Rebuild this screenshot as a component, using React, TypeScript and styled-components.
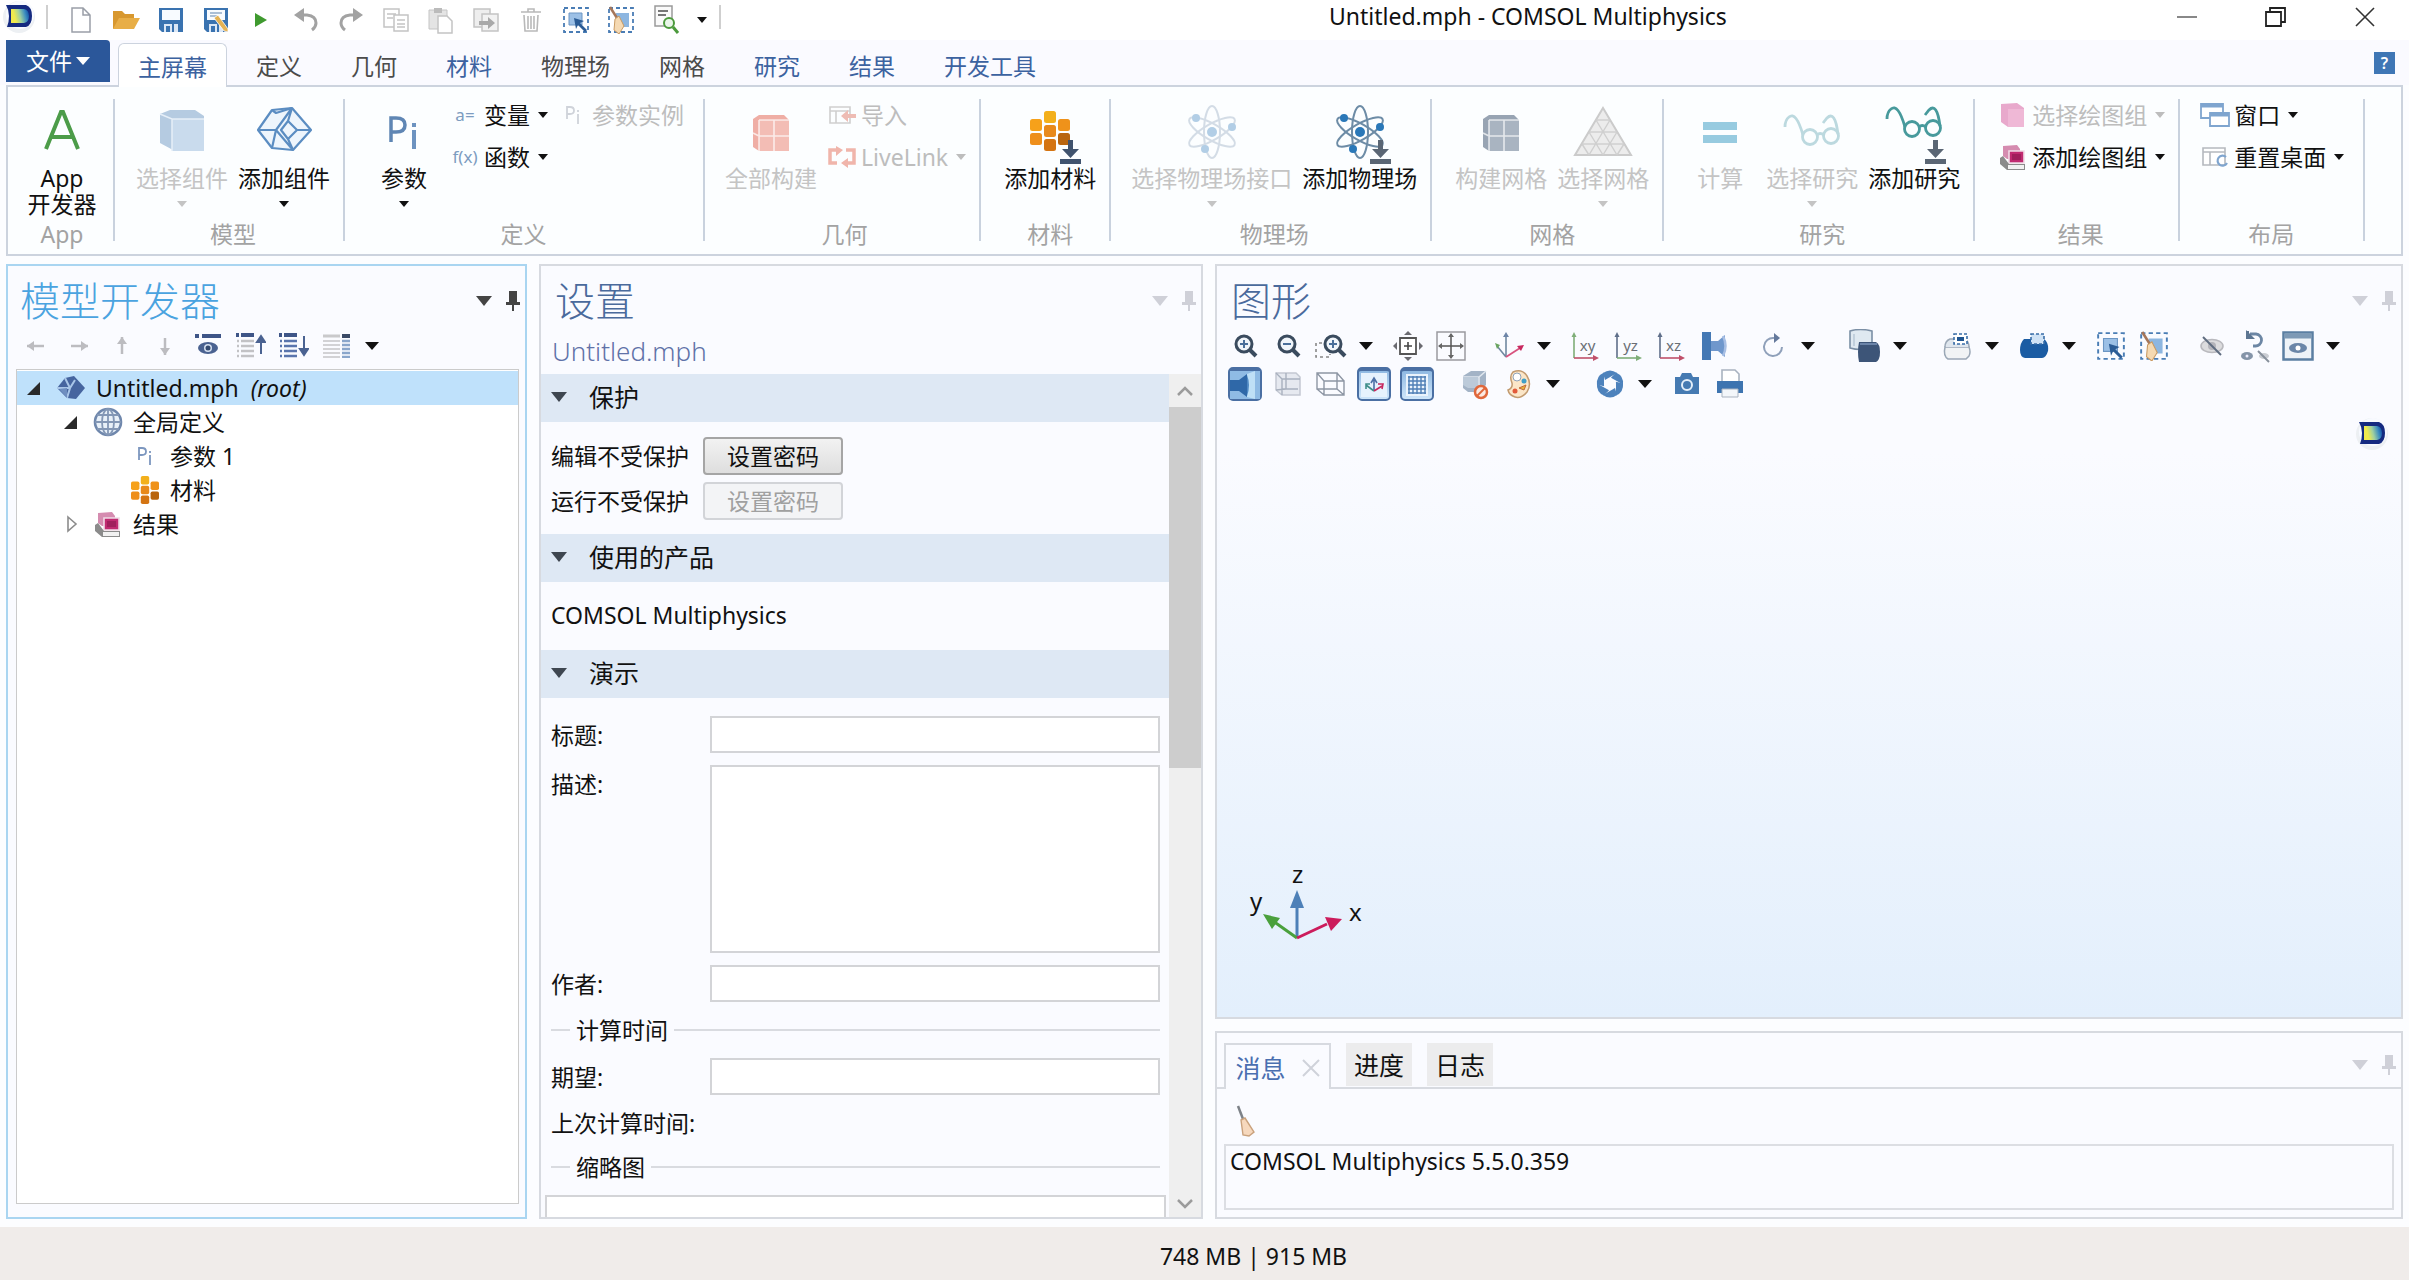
import React, { useState } from 'react';
import type { ReactNode } from 'react';
import styled, { createGlobalStyle } from 'styled-components';

const FONT = '"Noto Sans", "Noto Sans CJK SC", sans-serif';

const GlobalStyle = createGlobalStyle`
  html, body { margin: 0; padding: 0; height: 100%; }
  body {
    font-family: ${FONT};
    font-size: 23px;
    line-height: 26px;
    color: #111;
    background: #fcfdff;
    overflow: hidden;
  }
  *, *::before, *::after { box-sizing: border-box; }
  button, input, textarea { font: inherit; color: inherit; margin: 0; }
  button { background: none; border: 0; padding: 0; }
  svg { display: block; flex: none; }
`;

/* ---------- layout ---------- */

const Window = styled.div`
  display: flex;
  flex-direction: column;
  height: 100vh;
  white-space: nowrap;
`;

const TitleBar = styled.header`
  display: grid;
  grid-template-columns: 1fr auto 1fr;
  align-items: center;
  height: 40px;
  flex: none;
  background: #fff;
`;

const QuickBar = styled.div`
  display: flex;
  align-items: center;
  padding-left: 2px;
`;

const QuickButton = styled.button<{ $w?: number }>`
  width: ${p => p.$w ?? 45}px;
  height: 40px;
  display: flex;
  align-items: center;
  justify-content: center;
`;

const Rule = styled.span<{ $gap?: number }>`
  width: 2px;
  height: 24px;
  margin: 0 ${p => p.$gap ?? 8}px 6px;
  background: #cfcfcf;
`;

const AppMark = styled.span`
  padding-bottom: 6px;
`;

const WindowTitle = styled.h1`
  margin: 0;
  padding: 0 0 8px 604px;
  font-size: 23px;
  line-height: 32px;
  font-weight: 400;
`;

const WindowButtons = styled.div`
  display: flex;
  justify-content: flex-end;
`;

const WindowButton = styled.button`
  width: 89px;
  height: 40px;
  padding-bottom: 6px;
  display: flex;
  align-items: center;
  justify-content: center;
`;

const TabRow = styled.nav`
  display: flex;
  height: 45px;
  flex: none;
  padding: 0 6px;
  background: #fafaff;
`;

const FileButton = styled.button`
  width: 104px;
  height: 42px;
  margin-right: 8px;
  display: flex;
  align-items: center;
  justify-content: center;
  gap: 4px;
  border-radius: 0 4px 0 0;
  background: #2b579a;
  color: #fff;
`;

const RibbonTab = styled.button<{ $active?: boolean; $blue?: boolean }>`
  margin-top: 3px;
  height: ${p => (p.$active ? 44 : 42)}px;
  padding: ${p => (p.$active ? 2 : 4)}px ${p => (p.$active ? 19 : 24)}px 0 ${p => (p.$active ? 19 : 25)}px;
  margin-right: ${p => (p.$active ? 4 : 0)}px;
  border: ${p => (p.$active ? '1px solid #ccd3de' : '0')};
  border-bottom: 0;
  border-radius: 6px 6px 0 0;
  position: relative;
  z-index: 1;
  background: ${p => (p.$active ? '#fff' : 'transparent')};
  color: ${p => (p.$active || p.$blue ? '#3c62a0' : '#4b4b4b')};
`;

const HelpButton = styled.button`
  margin: 12px 8px 0 auto;
  width: 21px;
  height: 22px;
  background: #3f76b5;
  color: #fff;
  font-size: 16px;
  line-height: 22px;
  font-weight: 600;
`;

const Ribbon = styled.section`
  display: flex;
  flex: none;
  height: 171px;
  margin: 0 6px 8px;
  border: 2px solid #ccd3de;
  background: #fcfeff;
`;

const Group = styled.div<{ $left?: number; $right?: number }>`
  display: flex;
  flex-direction: column;
  justify-content: space-between;
  padding: 7px ${p => p.$right ?? 8}px 5px ${p => p.$left ?? 15}px;
  border-right: 2px solid transparent;
  border-image: linear-gradient(transparent 13px, #c9d2de 13px, #c9d2de 153px, transparent 153px) 1;
  border-image-width: 0 2px 0 0;
`;

const GroupBody = styled.div`
  display: flex;
  align-items: flex-start;
`;

const GroupName = styled.div`
  text-align: center;
  line-height: 30px;
  color: #a3a3a3;
`;

const BigButton = styled.button`
  min-width: 82px;
  padding: 7px 5px 0;
  display: flex;
  flex-direction: column;
  align-items: center;
  line-height: 26px;
  color: #111;
  &:disabled { color: #c4c4c4; }
`;

const CaretSlot = styled.span`
  height: 26px;
  display: flex;
  align-items: center;
`;

const Stack = styled.div`
  display: flex;
  flex-direction: column;
  align-items: flex-start;
  margin-left: 6px;
`;

const StackRow = styled.div`
  display: flex;
  gap: 8px;
`;

const SmallButton = styled.button`
  height: 42px;
  display: flex;
  align-items: center;
  gap: 5px;
  color: #111;
  &:disabled { color: #bdbdbd; }
`;

const SmallIcon = styled.span`
  width: 28px;
  display: flex;
  justify-content: center;
  color: #7d9cc0;
  font-size: 17px;
`;

const SmallCaret = styled.span`
  width: 16px;
  display: flex;
  justify-content: center;
`;

const Desk = styled.main`
  flex: 1;
  min-height: 0;
  display: grid;
  grid-template-columns: 521fr 664fr 1188fr;
  gap: 12px;
  padding: 0 6px;
`;

const RightColumn = styled.div`
  display: flex;
  flex-direction: column;
  gap: 12px;
  min-height: 0;
`;

const Panel = styled.section<{ $active?: boolean; $grow?: boolean }>`
  display: flex;
  flex-direction: column;
  min-height: 0;
  flex: ${p => (p.$grow ? '1' : 'none')};
  border: 2px solid ${p => (p.$active ? '#a9d5f1' : '#d7dae0')};
  background: #fafbff;
  overflow: hidden;
`;

const PanelHead = styled.div<{ $left?: number }>`
  flex: none;
  height: 61px;
  padding: 8px 5px 0 ${p => p.$left ?? 14}px;
  display: flex;
  align-items: center;
`;

const PanelTitle = styled.h2<{ $active?: boolean }>`
  margin: 0 auto 0 0;
  font-size: 40px;
  line-height: 52px;
  font-weight: 300;
  color: ${p => (p.$active ? '#4aa3e0' : '#4a6a9c')};
`;

const PanelTools = styled.div<{ $active?: boolean }>`
  display: flex;
  align-items: center;
  gap: 14px;
  margin-left: auto;
  color: ${p => (p.$active ? '#444' : '#cfd0d8')};
`;

const ToolRow = styled.div`
  flex: none;
  height: 38px;
  display: flex;
  align-items: center;
  padding-left: 6px;
`;

const ToolButton = styled.button<{ $gap?: number }>`
  width: 43px;
  height: 38px;
  margin-left: ${p => p.$gap ?? 0}px;
  display: flex;
  align-items: center;
  justify-content: center;
`;

const ToolCaret = styled(ToolButton)`
  width: 27px;
`;

const Pressed = styled.span`
  width: 34px;
  height: 34px;
  display: flex;
  align-items: center;
  justify-content: center;
  border: 2px solid #4a6fa3;
  border-top-width: 4px;
  border-radius: 5px;
  background: linear-gradient(#8fb9e2, #cfe6fa);
`;

/* ---------- model tree ---------- */

const Tree = styled.ul`
  flex: 1;
  margin: 4px 6px 13px 8px;
  padding: 1px 0 0;
  list-style: none;
  border: 1px solid #cbcbcb;
  background: #fff;
`;

const TreeItem = styled.li<{ $depth: number; $selected?: boolean }>`
  height: 34px;
  display: flex;
  align-items: center;
  padding-left: ${p => 10 + p.$depth * 37}px;
  background: ${p => (p.$selected ? '#bfe1fb' : 'transparent')};
`;

const Twisty = styled.button`
  width: 14px;
  height: 34px;
  margin-right: 14px;
  display: flex;
  align-items: center;
`;

const TreeIcon = styled.span`
  width: 32px;
  margin-right: 9px;
  display: flex;
  justify-content: center;
`;

const RootHint = styled.em`
  margin-left: 12px;
`;

/* ---------- settings ---------- */

const SubTitle = styled.div`
  flex: none;
  height: 47px;
  padding: 3px 0 0 11px;
  font-size: 26px;
  line-height: 42px;
  font-weight: 300;
  color: #5f72a8;
`;

const ScrollArea = styled.div`
  flex: 1;
  min-height: 0;
  display: flex;
`;

const ScrollContent = styled.div`
  flex: 1;
  min-width: 0;
  overflow: hidden;
`;

const SectionHead = styled.button`
  width: 100%;
  height: 48px;
  padding: 0 0 3px 10px;
  display: flex;
  align-items: center;
  gap: 22px;
  font-size: 25px;
  background: #dee8f4;
`;

const ProtectGrid = styled.div`
  display: grid;
  grid-template-columns: max-content 140px;
  gap: 7px 14px;
  align-items: center;
  padding: 15px 10px 14px;
`;

const PushButton = styled.button`
  height: 38px;
  border: 2px solid #a5a5a5;
  border-radius: 4px;
  background: linear-gradient(#f2f2f2, #dedede);
  &:disabled {
    color: #a0a0a0;
    border-color: #d2d4d8;
    background: #f3f4f6;
  }
`;

const ProductLine = styled.div`
  padding: 17px 10px 19px;
  line-height: 32px;
`;

const Form = styled.form`
  display: flex;
  flex-direction: column;
  gap: 12px;
  padding: 18px 9px 0 10px;
`;

const Field = styled.div`
  display: grid;
  grid-template-columns: 159px 1fr;
  align-items: start;
`;

const FieldLabel = styled.label`
  padding-top: 2px;
  line-height: 35px;
`;

const TextInput = styled.input`
  width: 100%;
  height: 37px;
  border: 2px solid #d3d4d7;
  background: #fff;
`;

const TextBox = styled.textarea`
  display: block;
  width: 100%;
  height: 188px;
  border: 2px solid #d3d4d7;
  background: #fff;
  resize: none;
`;

const Divider = styled.div`
  display: flex;
  align-items: center;
  gap: 6px;
  line-height: 32px;
  &::before, &::after {
    content: '';
    height: 2px;
    background: #d9dbe0;
  }
  &::before { width: 19px; }
  &::after { flex: 1; }
`;

const PlainRow = styled.div`
  line-height: 32px;
`;

const Thumbnail = styled.div`
  height: 200px;
  margin: 0 -6px;
  border: 2px solid #d3d4d7;
  background: #fff;
`;

const ScrollBar = styled.div`
  width: 32px;
  flex: none;
  display: flex;
  flex-direction: column;
  background: #efefef;
`;

const ScrollArrow = styled.button<{ $h: number }>`
  height: ${p => p.$h}px;
  display: flex;
  align-items: center;
  justify-content: center;
`;

const ScrollTrack = styled.div`
  flex: 1;
`;

const ScrollThumb = styled.div`
  height: 46%;
  background: #cdcdcd;
`;

/* ---------- graphics and messages ---------- */

const Canvas = styled.div`
  flex: 1;
  position: relative;
  background: linear-gradient(#fafbff 8%, #e3effc);
`;

const CanvasLogo = styled.div`
  position: absolute;
  top: 14px;
  right: 12px;
`;

const Axes = styled.div`
  position: absolute;
  left: 22px;
  bottom: 67px;
`;

const LogTabs = styled.div`
  height: 56px;
  flex: none;
  padding: 10px 5px 0 7px;
  display: flex;
  gap: 15px;
  border-bottom: 2px solid #d7dae0;
  font-size: 25px;
`;

const LogTab = styled.button<{ $active?: boolean }>`
  width: ${p => (p.$active ? 107 : 66)}px;
  height: ${p => (p.$active ? 46 : 43)}px;
  padding-top: ${p => (p.$active ? 2 : 0)}px;
  display: flex;
  align-items: center;
  justify-content: center;
  gap: 16px;
  border: ${p => (p.$active ? '2px solid #d7dae0' : '0')};
  border-bottom: 0;
  background: ${p => (p.$active ? '#fafbff' : '#ececed')};
  color: ${p => (p.$active ? '#4a6fb0' : '#111')};
`;

const LogTools = styled.div`
  height: 55px;
  flex: none;
  padding: 13px 0 0 7px;
`;

const LogBox = styled.output`
  display: block;
  height: 66px;
  margin: 0 7px 7px;
  padding: 1px 4px;
  line-height: 28px;
  border: 2px solid #dcdee3;
`;

const StatusBar = styled.footer`
  flex: none;
  height: 53px;
  margin-top: 8px;
  padding: 5px 0 0 98px;
  display: flex;
  align-items: center;
  justify-content: center;
  background: #f0ecea;
`;

/* ---------- icons ---------- */

type SvgProps = { w: number; h?: number; children: ReactNode };
const Svg = ({ w, h = w, children }: SvgProps) => (
  <svg width={w} height={h} viewBox={`0 0 ${w} ${h}`} fill="none" aria-hidden="true">{children}</svg>
);

const Caret = ({ color = '#111', w = 10 }: { color?: string; w?: number }) => (
  <Svg w={w} h={Math.round(w * 0.6)}>
    <path d={`M0 0H${w}L${w / 2} ${Math.round(w * 0.6)}Z`} fill={color} />
  </Svg>
);

const Pin = () => (
  <Svg w={14} h={20}><path d="M3 0h8v11h3v3H8v6H6v-6H0v-3h3z" fill="currentColor" /></Svg>
);

const Logo = () => (
  <Svg w={34}>
    <defs>
      <linearGradient id="lg" x1="0" x2="1" y1="0.6" y2="0.4">
        <stop offset="0.2" stopColor="#f0ea4e" /><stop offset="0.5" stopColor="#9fd0a0" /><stop offset="0.8" stopColor="#3d8ec0" /><stop offset="1" stopColor="#1757a8" />
      </linearGradient>
    </defs>
    <circle cx="17" cy="17" r="16" fill="#edf0f3" />
    <circle cx="18" cy="15" r="14" fill="#f8faff" />
    <path d="M4 5h20q6 2 6 11t-6 11H5q2-5 2-11T4 5z" fill="#152a80" />
    <path d="M9 9h13q5 1 5 7t-5 7H9z" fill="url(#lg)" />
  </Svg>
);

const NewFile = () => (
  <Svg w={22} h={28}><path d="M2 2h11l7 7v17H2zM13 2v7h7" fill="#fff" stroke="#9a9fa8" strokeWidth="1.5" /></Svg>
);
const OpenFile = () => (
  <Svg w={28} h={24}><path d="M1 21V3h9l3 3h9v5" fill="#d8982f" /><path d="M1 21l6-11h21l-6 11z" fill="#e8ae47" /></Svg>
);
const Floppy = ({ pen }: { pen?: boolean }) => (
  <Svg w={26} h={26}>
    <path d="M1 1h24v24H4l-3-3z" fill="#3a73b0" />
    <path d="M4 3h18v10H4z" fill="#f8fbff" />
    <path d="M6 17h14v8H6z" fill="#dbe7f5" /><path d="M8 19h4v6H8zM14 17h2v8h-2z" fill="#3a73b0" />
    {pen && <><path d="M7 6h12M7 9h7" stroke="#5f83ad" /><path d="M11 11l10 13 4 1v-3L15 8z" fill="#e4b254" stroke="#fff" strokeWidth="0.8" /></>}
  </Svg>
);
const Run = () => <Svg w={14} h={16}><path d="M1 1l12 7-12 7z" fill="#3f9a2f" /></Svg>;
const Undo = ({ flip }: { flip?: boolean }) => (
  <Svg w={26} h={26}>
    <g transform={flip ? 'translate(26 0) scale(-1 1)' : undefined}>
      <path d="M7 8h7q9 1 9 8 0 4-4 7" stroke="#a2a2a2" strokeWidth="3" />
      <path d="M11 1L1 8l10 7z" fill="#a2a2a2" />
    </g>
  </Svg>
);
const Copy = () => (
  <Svg w={28}><g stroke="#c4c4c4" strokeWidth="1.5"><path d="M2 3h15v18H2zM5 8h9M5 12h6" /><path d="M12 9h14v16H12zM15 14h8M15 18h8M15 21h8" fill="#fff" /></g></Svg>
);
const Paste = () => (
  <Svg w={28}><path d="M2 4h18v19H2z" fill="#e4e4e4" stroke="#c4c4c4" /><path d="M7 2h8v5H7z" fill="#bbb" /><path d="M11 10h9l5 5v12H11z" fill="#fff" stroke="#c4c4c4" strokeWidth="1.5" /></Svg>
);
const Duplicate = () => (
  <Svg w={28}><g stroke="#c4c4c4" strokeWidth="1.5"><path d="M2 3h16v18H2z" fill="#eee" /><path d="M10 8h16v17H10z" fill="#f2f2f2" /></g><path d="M7 15h9v-4l7 6-7 6v-4H7z" fill="#a9a9a9" /></Svg>
);
const Trash = () => (
  <Svg w={22} h={26}><path d="M1 5h20M8 5V2h6v3M4 8l1 16h12l1-16M8 9v13M11 9v13M14 9v13" stroke="#b9b9b9" strokeWidth="1.6" /></Svg>
);
const SelectBox = ({ s = 28 }: { s?: number }) => (
  <svg width={s} height={s} viewBox="0 0 28 28" fill="none" aria-hidden="true">
    <path d="M2 2h24v24H2z" stroke="#4a7db5" strokeWidth="1.8" strokeDasharray="4 3" />
    <path d="M7 7h13v12H7z" fill="#9cc0e6" stroke="#6c96c4" /><path d="M12 12l10 3-4 2 7 7-2 2-7-7-2 4z" fill="#2b5c96" />
  </svg>
);
const BroomBox = ({ s = 28 }: { s?: number }) => (
  <svg width={s} height={s} viewBox="0 0 28 28" fill="none" aria-hidden="true">
    <path d="M2 2h24v24H2z" stroke="#4a7db5" strokeWidth="1.8" strokeDasharray="4 3" />
    <path d="M9 7h13v14H9z" fill="#8db6e0" /><path d="M3 1l7 11" stroke="#a5765a" strokeWidth="2.500" />
    <path d="M8 13l4-3 5 10-5 8-5-4z" fill="#f5d9b2" stroke="#c99a62" />
  </svg>
);
const FindDoc = () => (
  <Svg w={28} h={30}><path d="M3 1h17v20H3z" fill="#fafafa" stroke="#9a9a9a" strokeWidth="1.5" /><path d="M6 6h10M6 10h8" stroke="#777" strokeWidth="2" /><circle cx="17" cy="18" r="5" fill="#eaf6ea" stroke="#4c9a3c" strokeWidth="2" /><path d="M21 22l5 6" stroke="#4c9a3c" strokeWidth="3" /></Svg>
);

const LetterA = () => (
  <Svg w={64}><path d="M16 48L31 11h2l15 37M21 36h22" stroke="#4c9c49" strokeWidth="4" /></Svg>
);
const CubeFaded = () => (
  <Svg w={64}><path d="M10 13l10-4h25l9 6v34H23L10 42z" fill="#b5cbe1" /><path d="M22 18h32v32H22z" fill="#c9dbed" /><path d="M10 13l12 5h32M22 18v32" stroke="#e6eff8" strokeWidth="1.5" /></Svg>
);
const CubeWire = () => (
  <Svg w={64}><g stroke="#5b8dc2" strokeWidth="2.2" strokeLinejoin="round"><path d="M6 29L20 9l20-2 19 22-18 20-21-2z" fill="#eef5fc" /><path d="M40 7L24 29l17 20M24 29H6M20 9l4 3 16-5M36 20l9 9-9 9-7-9zM36 20l4-13M45 29h14M36 38l5 11M20 47l4-18" /></g></Svg>
);
const PiBig = () => (
  <Svg w={64}><path d="M19 41V17h5q9 0 9 7t-9 7h-5" stroke="#5f86b4" strokeWidth="3.5" /><path d="M42 29v19M42 22v4" stroke="#6d93c0" strokeWidth="4" /></Svg>
);
const Brick = ({ c, d }: { c: string; d: string }) => (
  <Svg w={64}><path d="M14 18l6-4h25l5 5v31H20l-6-4z" fill={d} /><path d="M20 19h30v31H20z" fill={c} /><path d="M35 19v31M20 35h30M14 32l6 3M20 19v31M20 19h30" stroke="#fff" strokeOpacity="0.7" strokeWidth="1.6" /></Svg>
);
const DownArrow = ({ x, c = '#40536e' }: { x: number; c?: string }) => (
  <g transform={`translate(${x} 39)`} fill={c}><path d="M8 0h5v9h6l-8.500 9L2 9h6z" /><path d="M0 19h21v5H0z" /></g>
);
const hexes: [number, number, string][] = [
  [14, 0, '#f3b01c'], [0, 8, '#f6a11a'], [28, 8, '#ef921a'], [14, 14, '#e8891b'], [0, 22, '#ee8f1c'], [28, 22, '#b9650f'], [14, 28, '#d47412'],
];
const Honey = () => <>{hexes.map(([x, y, c]) => <rect key={`${x}-${y}`} x={x} y={y} width="12" height="12" rx="2.500" fill={c} />)}</>;
const MaterialBig = () => (
  <Svg w={64}><g transform="translate(12 10)"><Honey /></g><DownArrow x={42} /></Svg>
);
const MaterialSmall = () => (
  <svg width="28" height="28" viewBox="0 0 40 40" aria-hidden="true"><Honey /></svg>
);
const Atom = ({ dim }: { dim?: boolean }) => (
  <Svg w={64}>
    <g opacity={dim ? 0.35 : 1}>
      <g stroke={dim ? '#8aa0b8' : '#6d8ca6'} strokeWidth="2">
        <ellipse cx="32" cy="31" rx="8" ry="26" /><ellipse cx="32" cy="31" rx="8" ry="26" transform="rotate(60 32 31)" /><ellipse cx="32" cy="31" rx="8" ry="26" transform="rotate(-60 32 31)" />
      </g>
      <g fill="#2a78b8"><circle cx="32" cy="31" r="5" /><circle cx="16" cy="17" r="4" /><circle cx="52" cy="26" r="4" /><circle cx="25" cy="48" r="4" /></g>
    </g>
    {!dim && <DownArrow x={42} c="#5a6674" />}
  </Svg>
);
const MeshTri = () => (
  <Svg w={64}><path d="M32 7L60 54H4z" fill="#ececec" stroke="#cbcbcb" strokeWidth="2" /><path d="M25 19h14M18 31h28M11 43h42M25 19l21 35M18 31l14 23M11 43l7 11M39 19L18 54M46 31L32 54M53 43l-7 11" stroke="#cfcfcf" strokeWidth="1.4" /></Svg>
);
const Equals = () => <Svg w={64}><path d="M15 21h34v8H15zM15 34h34v8H15z" fill="#97cbe0" /></Svg>;
const Glasses = ({ dim }: { dim?: boolean }) => (
  <Svg w={64}>
    <g stroke={dim ? '#bcd9df' : '#479a9c'} strokeWidth="2.800" transform={dim ? 'translate(0 8)' : undefined}>
      <circle cx="30" cy="28" r="7.500" /><circle cx="51" cy="27" r="7.500" /><path d="M37 26q3-3 7 0M23 26Q16 2 9 8 5 11 5 18M58 25Q55 1 47 9l-4 5" />
    </g>
    {!dim && <DownArrow x={43} c="#5a6674" />}
  </Svg>
);

const ImportIcon = () => (
  <Svg w={28} h={20}><path d="M2 2h20v16H2zM2 6h20M8 6v12" stroke="#cfcfcf" strokeWidth="1.6" /><path d="M28 9h-8V5l-7 6 7 6v-4h8z" fill="#eebcb4" /></Svg>
);
const LinkIcon = () => (
  <Svg w={28} h={22}><g stroke="#f0b5ab" strokeWidth="3.500"><path d="M9 4H2v13h7M18 4h8v13h-7" /></g><path d="M8 0l7 4-7 6zM20 12v10l-7-5z" fill="#f0b5ab" /></Svg>
);
const PinkCube = () => (
  <Svg w={28} h={26}><path d="M2 2l16-1 7 5v19H9L2 20z" fill="#e8a9cc" /><path d="M9 7h16v18H9z" fill="#efb8d6" /></Svg>
);
const PlotStack = () => (
  <Svg w={28} h={28}><path d="M4 3l14-1 3 4v10H8l-4-3z" fill="#d58cb0" /><path d="M10 8h15v12H10z" fill="#c02a70" stroke="#f0dbe6" strokeWidth="1.6" /><path d="M13 11h9v6h-9z" fill="#a01f5c" /><path d="M1 15l3-2 6 8h16v6H8l-7-6z" fill="#8b8b8b" /><path d="M9 22h16v4H9z" fill="#f1f1f1" /></Svg>
);
const WindowsIcon = () => (
  <Svg w={30} h={26}><g fill="#fff" stroke="#7fa5cf" strokeWidth="1.8"><path d="M1 2h22v14H1z" /><path d="M10 11h19v13H10z" /></g><path d="M1 4h22M10 13h19" stroke="#7fa5cf" strokeWidth="3" /></Svg>
);
const ResetIcon = () => (
  <Svg w={28} h={24}><path d="M2 3h22v17H2zM2 7h22M9 7v13" fill="#fff" stroke="#b5b9bf" strokeWidth="1.6" /><path d="M25 12a5 5 0 1 0 1 6" stroke="#7fa5cf" strokeWidth="2.2" /></Svg>
);

const Arrow = ({ r }: { r: number }) => (
  <Svg w={20}><g transform={`rotate(${r} 10 10)`}><path d="M1 10h17" stroke="#bcbcc0" strokeWidth="2.500" /><path d="M8 5l-7 5 7 5z" fill="#bcbcc0" /></g></Svg>
);
const EyeBar = () => (
  <Svg w={26} h={24}><path d="M0 2h4M7 2h19" stroke="#3e5587" strokeWidth="4" /><ellipse cx="13" cy="14" rx="10" ry="6" fill="#4a6291" /><circle cx="13" cy="14" r="4" fill="#d5e0f0" /><circle cx="13" cy="14" r="2.500" fill="#33496f" /></Svg>
);
const ListArrow = ({ up }: { up?: boolean }) => (
  <Svg w={30} h={26}>
    <path d="M0 2h3M5 2h13" stroke="#3e5587" strokeWidth="4" />
    <path d="M1 8h2M5 8h13M1 13h2M5 13h13M1 18h2M5 18h13M1 23h2M5 23h13" stroke={up ? '#c2c2c5' : '#5a75ad'} strokeWidth="2.500" />
    <path d={up ? 'M25 21V6M21 9l4-6 4 6z' : 'M25 3v16M21 16l4 6 4-6z'} fill="#4a6291" stroke="#4a6291" strokeWidth="2" />
  </Svg>
);
const Columns = () => (
  <Svg w={28} h={24}><path d="M0 2h17" stroke="#c9c9cb" strokeWidth="3" /><path d="M0 7h17M0 11h17M0 15h17M0 19h17M0 23h17" stroke="#d2d2d5" strokeWidth="2" /><path d="M19 2h8" stroke="#3a4a66" strokeWidth="4" /><path d="M19 7h8M19 11h8M19 15h8M19 19h8M19 23h8" stroke="#8aa6cb" strokeWidth="2.500" /></Svg>
);

const TriOpen = () => <Svg w={13}><path d="M13 0v13H0z" fill="#2a2a2a" /></Svg>;
const TriClosed = () => <Svg w={14} h={18}><path d="M4 2l8 7-8 7z" stroke="#8c8c8c" strokeWidth="1.6" /></Svg>;
const RootIcon = () => (
  <Svg w={30} h={26}><path d="M1 13L9 3l9-2 11 12-9 11-9-1z" fill="#46659f" /><path d="M9 3l5 10-3 10M1 13h13M14 13l5-8" stroke="#a9c6e8" strokeWidth="2" /><path d="M11 23l-8-9 8-1z" fill="#6f8fc0" /></Svg>
);
const Globe = () => (
  <Svg w={30}><g stroke="#8397b5" strokeWidth="1.8"><circle cx="15" cy="15" r="13" fill="#e8f0f8" stroke="#6f87ac" strokeWidth="2.600" /><ellipse cx="15" cy="15" rx="6" ry="13" /><path d="M15 2v26M2 15h26M4 8h22M4 22h22" /></g></Svg>
);
const PiSmall = ({ c = '#7d97bf' }: { c?: string }) => (
  <Svg w={16} h={20}><path d="M2 14V2h3q4 0 4 3.500T5 9H2M13 9v10M13 5v2" stroke={c} strokeWidth="1.800" /></Svg>
);

const Mag = ({ sign, box }: { sign: string; box?: boolean }) => (
  <Svg w={box ? 34 : 28} h={28}>
    {box && <path d="M8 11H2v14h14v-3" stroke="#888" strokeWidth="1.6" strokeDasharray="3 3" />}
    <g transform={box ? 'translate(6 0)' : undefined}>
      <circle cx="13" cy="12" r="8" stroke="#3a4b5e" strokeWidth="3" fill="#f0f5fa" />
      <path d={sign === '+' ? 'M9 12h8M13 8v8' : 'M9 12h8'} stroke="#4a6f9a" strokeWidth="2" />
      <path d="M19 18l6 6" stroke="#3a4b5e" strokeWidth="4" />
    </g>
  </Svg>
);
const Extents = () => (
  <Svg w={30}><path d="M7 7h16v16H7z" fill="#fff" stroke="#555" strokeWidth="1.8" /><path d="M11 15h8M15 11v8" stroke="#444" strokeWidth="1.6" /><path d="M15 0l4 4h-8zM15 30l4-4h-8zM0 15l4-4v8zM30 15l-4-4v8z" fill="#6a6a70" /></Svg>
);
const ZoomSel = () => (
  <Svg w={30}><path d="M1 1h28v28H1z" stroke="#9a9aa0" strokeWidth="1.5" /><path d="M15 3v24M3 15h24" stroke="#555" strokeWidth="1.5" /><path d="M15 2l3 4h-6zM15 28l3-4h-6zM2 15l4-3v6zM28 15l-4-3v6z" fill="#666" /></Svg>
);
const AxisIcon = ({ s = 30 }: { s?: number }) => (
  <svg width={s} height={s} viewBox="0 0 30 30" fill="none" aria-hidden="true"><path d="M12 26V4M12 26L3 15" stroke="#7088a0" strokeWidth="1.6" /><path d="M12 1l3 5H9z" fill="#6d85a8" /><path d="M1 12l5 2-3 4z" fill="#6aa560" /><path d="M12 26l14-9" stroke="#d8537f" strokeWidth="1.8" /><path d="M30 14l-3 6-4-5z" fill="#c8285f" /></svg>
);
const AxisSmall = () => (
  <Svg w={26} h={24}><path d="M0 0h26v24H0z" fill="#e6f2fd" /><path d="M13 18V7M10 10l3-5 3 5" stroke="#4c6fa5" strokeWidth="1.6" /><path d="M13 18l-8-6M5 16v-5h4" stroke="#3f8f8a" strokeWidth="1.6" /><path d="M13 18l8-5M17 11h5l-1 5" stroke="#c8285f" strokeWidth="1.600" /></Svg>
);
const AxisFrame = styled.span`
  position: relative;
  width: 30px;
  height: 30px;
  color: #6a6f76;
  font-size: 15px;
  line-height: 20px;
  padding: 4px 0 0 4px;
`;
const AxisLines = styled.span`
  position: absolute;
  inset: 0;
`;
const PlaneIcon = ({ label, v, h }: { label: string; v: string; h: string }) => (
  <AxisFrame>
    <AxisLines><Svg w={30}><path d="M3 27V4" stroke={v} strokeWidth="1.6" /><path d="M3 1l2.500 5H.5z" fill={v} /><path d="M3 27h20" stroke={h} strokeWidth="1.6" /><path d="M22 24l6 3-6 3z" fill={h} /></Svg></AxisLines>
    {label}
  </AxisFrame>
);
const Clip = () => (
  <Svg w={28}><path d="M1 0h9v28H1z" fill="#4478b4" /><path d="M10 9h7l7-6v22l-7-6h-7z" fill="#6f97cc" /><path d="M22 4q5 10 0 20" stroke="#a8bfe4" strokeWidth="2.500" /></Svg>
);
const Rotate = () => <Svg w={26}><path d="M14 5a9 9 0 1 0 8 9" stroke="#8fa0ba" strokeWidth="2" /><path d="M14 0l6 5-6 5z" fill="#64799c" /></Svg>;
const Cylinders = () => (
  <Svg w={32} h={34}><path d="M1 2q10-3 22 0v17q-12 3-22 0z" fill="#dfe9f1" stroke="#7b8fa5" strokeWidth="1.6" /><path d="M5 5v12" stroke="#b9c9d8" strokeWidth="1.600" /><path d="M10 13h17q4 2 4 10t-4 10H10q-2-10 0-20z" fill="#3d5578" /><path d="M11 15h17" stroke="#6b84a8" strokeWidth="2" /></Svg>
);
const HideBox = () => (
  <Svg w={30} h={28}><path d="M3 15h24q2 5 0 9l-3 3H6q-5-3-3-12z" fill="#f1f3f5" stroke="#9aa7b6" strokeWidth="1.5" /><path d="M3 15q0-6 5-8h14q5 2 5 8" fill="#dfe6ee" stroke="#9aa7b6" strokeWidth="1.5" /><path d="M12 2h13v10H12z" fill="#fff" stroke="#3a6ea8" strokeDasharray="3 2" strokeWidth="1.6" /><path d="M15 5h7v4h-7z" fill="#1f5591" /></Svg>
);
const BlueBox = () => (
  <Svg w={30} h={28}><path d="M5 7h20q5 4 4 12-2 7-6 7H6q-5-1-5-8t4-11z" fill="#1b5ca3" /><path d="M12 2h13v10H12z" fill="#cfe2f5" stroke="#3a6ea8" strokeDasharray="3 2" strokeWidth="1.6" /></Svg>
);
const EyeOff = () => (
  <Svg w={28} h={22}><ellipse cx="14" cy="11" rx="11" ry="6.500" fill="#dcdcde" stroke="#b9b9be" strokeWidth="1.6" /><circle cx="14" cy="11" r="4" fill="#b4b4ba" /><path d="M5 2l18 18" stroke="#5f6d80" strokeWidth="2" /></Svg>
);
const EyeReset = () => (
  <Svg w={30} h={34}><path d="M10 5h6a6 6 0 1 1-1 12h-2" stroke="#6c86a4" strokeWidth="2.800" /><path d="M7 2h2v8H6z" fill="#5c7592" /><path d="M6 1v9h9z" fill="#5c7592" /><ellipse cx="7" cy="27" rx="6" ry="4" fill="#8494a8" /><circle cx="7" cy="27" r="1.500" fill="#eef" /><ellipse cx="24" cy="27" rx="5" ry="3" fill="#c9ccd2" /><path d="M18 22l11 11" stroke="#868f9b" strokeWidth="2" /></Svg>
);
const EyeWindow = () => (
  <Svg w={32} h={30}><path d="M1.500 1.500h29v27h-29z" fill="#eef3f8" stroke="#5b7fa2" strokeWidth="2.500" /><path d="M2 5h28" stroke="#7d99b5" strokeWidth="5" /><ellipse cx="16" cy="17" rx="9" ry="5" fill="#6a86a8" /><circle cx="16" cy="17" r="2.500" fill="#fff" /></Svg>
);
const Speaker = () => <Svg w={30} h={28}><path d="M0 0h30v28H0z" fill="#8fbbe4" /><path d="M0 9h9l8-6v23l-8-6H0z" fill="#2f68a8" /><path d="M17 3l8-3v28l-8-2z" fill="#bfe0f6" /><path d="M17 4q4 10 0 21z" fill="#4f88c2" /></Svg>;
const Box3D = () => (
  <Svg w={28} h={26}><path d="M2 2h20l4 4v18H8L2 19z" fill="#e6e9f0" stroke="#c3c8d2" strokeWidth="1.5" /><path d="M8 8h18M8 8v16M2 2l6 6M8 18h16M12 2v16M2 19l10-1" stroke="#a8b0be" strokeWidth="1.4" /></Svg>
);
const BoxWire = () => (
  <Svg w={30} h={26}><path d="M1 2h20v16H1zM8 10h20v14H8zM1 2l7 8M21 2l7 8M1 18l7 6M21 18l7 6" stroke="#8d96a4" strokeWidth="1.4" /></Svg>
);
const GridIcon = () => (
  <Svg w={24}><path d="M1 1h22v22H1z" fill="#eaf3fc" /><path d="M4 3v18M8 3v18M12 3v18M16 3v18M20 3v18M3 4h18M3 8h18M3 12h18M3 16h18M3 20h18" stroke="#4f7fb6" strokeWidth="1.400" /></Svg>
);
const CubeBan = () => (
  <Svg w={28} h={32}><path d="M2 8l8-5h15v14l-7 7H7l-5-4z" fill="#a3b3c6" /><path d="M2 9h16l7-6M18 9v12" stroke="#dfe6ee" strokeWidth="1.600" /><path d="M2 9h15v11H7l-5-3z" fill="#bccad9" /><circle cx="20" cy="24" r="6" fill="#fbe9e2" stroke="#e0683c" strokeWidth="2.500" /><path d="M16 28l8-8" stroke="#e0683c" strokeWidth="2" /></Svg>
);
const Palette = () => (
  <Svg w={26} h={30}><path d="M8 3q9-4 14 4t0 16q-6 7-12 5t-7-7q5-2 4-7-3-7 1-11z" fill="#fbe6c8" stroke="#c29b70" strokeWidth="1.5" /><circle cx="12" cy="8" r="4" fill="#fff" stroke="#8fa3b8" /><circle cx="19" cy="12" r="2.500" fill="#3fa0c8" /><circle cx="10" cy="22" r="2.500" fill="#e25a3a" /><path d="M14 19l7-3-2 5z" fill="#e7b43a" stroke="#c06a3a" /></Svg>
);
const blades = [0, 60, 120, 180, 240, 300];
const Shutter = () => (
  <Svg w={30}>
    {blades.map(a => <path key={a} d="M8 4Q15-1 22 4L10 11Z" fill="#4d82bc" transform={`rotate(${a} 15 15)`} />)}
  </Svg>
);
const Camera = () => (
  <Svg w={24} h={22}><path d="M0 4h5l2-4h9l2 4h6v17H0z" fill="#457ab2" /><circle cx="12" cy="12" r="5" stroke="#e3eef9" strokeWidth="2" /></Svg>
);
const Printer = () => (
  <Svg w={28} h={30}><path d="M6 13V1h13l4 4v8" fill="#fff" stroke="#a9b3c0" strokeWidth="1.6" /><path d="M1 12h26v12H1z" fill="#3d74b0" /><path d="M6 20h16v8H6z" fill="#f3f6fa" stroke="#a9b3c0" /></Svg>
);
const Broom = () => (
  <Svg w={24} h={32}><path d="M4 1l5 13" stroke="#7d8288" strokeWidth="2.500" /><path d="M7 15l4-2 9 14-5 4-6-1z" fill="#f6d8bd" stroke="#c9a17c" strokeWidth="1.400" /></Svg>
);
const Cross = ({ s, c, sw = 2 }: { s: number; c: string; sw?: number }) => (
  <Svg w={s}><path d={`M1 1L${s - 1} ${s - 1}M${s - 1} 1L1 ${s - 1}`} stroke={c} strokeWidth={sw} /></Svg>
);
const Chevron = ({ up }: { up?: boolean }) => (
  <Svg w={16} h={10}><path d={up ? 'M1 9l7-7 7 7' : 'M1 1l7 7 7-7'} stroke="#9b9b9b" strokeWidth="2.500" /></Svg>
);

/* ---------- data ---------- */

const quick: [string, ReactNode, boolean?][] = [
  ['新建', <NewFile />], ['打开', <OpenFile />], ['保存', <Floppy />], ['另存为', <Floppy pen />], ['运行', <Run />],
  ['撤消', <Undo />, true], ['重做', <Undo flip />, true], ['复制', <Copy />, true], ['粘贴', <Paste />, true],
  ['生成副本', <Duplicate />, true], ['删除', <Trash />, true], ['全选', <SelectBox />], ['清除选择', <BroomBox />], ['查找', <FindDoc />],
];

const ribbonTabs: [string, boolean?][] = [
  ['主屏幕'], ['定义'], ['几何'], ['材料', true], ['物理场'], ['网格'], ['研究', true], ['结果', true], ['开发工具', true],
];

type Tool = { name: string; icon?: ReactNode; gap?: number };
const graphicsTop: Tool[] = [
  { name: '放大', icon: <Mag sign="+" /> }, { name: '缩小', icon: <Mag sign="-" /> }, { name: '框选缩放', icon: <Mag sign="+" box /> }, { name: '缩放选项' },
  { name: '缩放到窗口大小', icon: <Extents />, gap: 7 }, { name: '缩放到选择', icon: <ZoomSel /> },
  { name: '默认视图', icon: <AxisIcon />, gap: 15 }, { name: '视图选项' },
  { name: 'xy 视图', icon: <PlaneIcon label="xy" v="#7fae78" h="#c0506a" />, gap: 7 },
  { name: 'yz 视图', icon: <PlaneIcon label="yz" v="#5f6f8a" h="#7fae78" /> },
  { name: 'xz 视图', icon: <PlaneIcon label="xz" v="#5f6f8a" h="#c0506a" /> },
  { name: '场景光', icon: <Clip /> }, { name: '旋转', icon: <Rotate />, gap: 15 }, { name: '旋转选项' },
  { name: '透明', icon: <Cylinders />, gap: 22 }, { name: '透明选项' },
  { name: '选择对象', icon: <HideBox />, gap: 22 }, { name: '选择对象选项' },
  { name: '选择域', icon: <BlueBox />, gap: 7 }, { name: '选择域选项' },
  { name: '选择框', icon: <SelectBox s={30} />, gap: 7 }, { name: '取消选择框', icon: <BroomBox s={30} /> },
  { name: '隐藏', icon: <EyeOff />, gap: 15 }, { name: '重置隐藏', icon: <EyeReset /> }, { name: '查看', icon: <EyeWindow /> }, { name: '查看选项' },
];
const graphicsBottom: Tool[] = [
  { name: '场景灯光', icon: <Pressed><Speaker /></Pressed> }, { name: '透明度', icon: <Box3D /> }, { name: '线框', icon: <BoxWire /> },
  { name: '显示坐标轴', icon: <Pressed><AxisSmall /></Pressed> }, { name: '显示网格', icon: <Pressed><GridIcon /></Pressed> },
  { name: '隐藏几何', icon: <CubeBan />, gap: 15 }, { name: '颜色', icon: <Palette /> }, { name: '颜色选项' },
  { name: '快照', icon: <Shutter />, gap: 22 }, { name: '快照选项' }, { name: '相机', icon: <Camera />, gap: 7 }, { name: '打印', icon: <Printer /> },
];

/* ---------- parts ---------- */

type BigProps = { icon: ReactNode; label: ReactNode; caret?: boolean; off?: boolean };
const Big = ({ icon, label, caret, off }: BigProps) => (
  <BigButton disabled={off}>
    {icon}
    <span>{label}</span>
    {caret && <CaretSlot><Caret color={off ? '#c4c4c4' : '#111'} /></CaretSlot>}
  </BigButton>
);

const Small = ({ icon, label, caret, off }: BigProps) => (
  <SmallButton disabled={off}>
    <SmallIcon>{icon}</SmallIcon>
    <span>{label}</span>
    {caret && <SmallCaret><Caret color={off ? '#bdbdbd' : '#111'} /></SmallCaret>}
  </SmallButton>
);

const Tools = ({ items }: { items: Tool[] }) => (
  <>
    {items.map(t => t.icon
      ? <ToolButton key={t.name} $gap={t.gap} aria-label={t.name}>{t.icon}</ToolButton>
      : <ToolCaret key={t.name} aria-label={t.name}><Caret w={14} /></ToolCaret>)}
  </>
);

const PanelMenu = ({ active }: { active?: boolean }) => (
  <PanelTools $active={active}>
    <button aria-label="面板菜单"><Caret w={16} color="currentColor" /></button>
    <button aria-label="固定"><Pin /></button>
  </PanelTools>
);

const Section = ({ title }: { title: string }) => (
  <SectionHead><Caret w={16} color="#3e4650" />{title}</SectionHead>
);

const ModelBuilder = () => (
  <Panel $active $grow>
    <PanelHead $left={12}><PanelTitle $active>模型开发器</PanelTitle><PanelMenu active /></PanelHead>
    <ToolRow>
      <ToolButton aria-label="后退"><Arrow r={0} /></ToolButton>
      <ToolButton aria-label="前进"><Arrow r={180} /></ToolButton>
      <ToolButton aria-label="上移"><Arrow r={90} /></ToolButton>
      <ToolButton aria-label="下移"><Arrow r={270} /></ToolButton>
      <ToolButton aria-label="显示"><EyeBar /></ToolButton>
      <ToolButton aria-label="全部折叠"><ListArrow up /></ToolButton>
      <ToolButton aria-label="全部展开"><ListArrow /></ToolButton>
      <ToolButton aria-label="列"><Columns /></ToolButton>
      <ToolCaret aria-label="列选项"><Caret w={14} /></ToolCaret>
    </ToolRow>
    <Tree>
      <TreeItem $depth={0} $selected>
        <Twisty aria-label="折叠"><TriOpen /></Twisty><TreeIcon><RootIcon /></TreeIcon>Untitled.mph<RootHint>(root)</RootHint>
      </TreeItem>
      <TreeItem $depth={1}><Twisty aria-label="折叠"><TriOpen /></Twisty><TreeIcon><Globe /></TreeIcon>全局定义</TreeItem>
      <TreeItem $depth={2}><Twisty as="span" /><TreeIcon><PiSmall /></TreeIcon>参数 1</TreeItem>
      <TreeItem $depth={2}><Twisty as="span" /><TreeIcon><MaterialSmall /></TreeIcon>材料</TreeItem>
      <TreeItem $depth={1}><Twisty aria-label="展开"><TriClosed /></Twisty><TreeIcon><PlotStack /></TreeIcon>结果</TreeItem>
    </Tree>
  </Panel>
);

const Settings = () => (
  <Panel $grow>
    <PanelHead><PanelTitle>设置</PanelTitle><PanelMenu /></PanelHead>
    <SubTitle>Untitled.mph</SubTitle>
    <ScrollArea>
      <ScrollContent>
        <Section title="保护" />
        <ProtectGrid>
          <span>编辑不受保护</span><PushButton>设置密码</PushButton>
          <span>运行不受保护</span><PushButton disabled>设置密码</PushButton>
        </ProtectGrid>
        <Section title="使用的产品" />
        <ProductLine>COMSOL Multiphysics</ProductLine>
        <Section title="演示" />
        <Form>
          <Field><FieldLabel htmlFor="title">标题:</FieldLabel><TextInput id="title" /></Field>
          <Field><FieldLabel htmlFor="desc">描述:</FieldLabel><TextBox id="desc" /></Field>
          <Field><FieldLabel htmlFor="author">作者:</FieldLabel><TextInput id="author" /></Field>
          <Divider>计算时间</Divider>
          <Field><FieldLabel htmlFor="expected">期望:</FieldLabel><TextInput id="expected" /></Field>
          <PlainRow>上次计算时间:</PlainRow>
          <Divider>缩略图</Divider>
          <Thumbnail />
        </Form>
      </ScrollContent>
      <ScrollBar>
        <ScrollArrow $h={33} aria-label="向上滚动"><Chevron up /></ScrollArrow>
        <ScrollTrack><ScrollThumb /></ScrollTrack>
        <ScrollArrow $h={26} aria-label="向下滚动"><Chevron /></ScrollArrow>
      </ScrollBar>
    </ScrollArea>
  </Panel>
);

const Graphics = () => (
  <Panel $grow>
    <PanelHead><PanelTitle>图形</PanelTitle><PanelMenu /></PanelHead>
    <ToolRow><Tools items={graphicsTop} /></ToolRow>
    <ToolRow><Tools items={graphicsBottom} /></ToolRow>
    <Canvas>
      <CanvasLogo><Logo /></CanvasLogo>
      <Axes>
        <svg width="130" height="106" viewBox="0 -20 130 106" fontFamily={FONT} fontSize="24" fill="#111">
          <path d="M58 74V42" stroke="#4d80b8" strokeWidth="3" /><path d="M58 26l7 18H51z" fill="#4d80b8" />
          <path d="M58 74L34 57" stroke="#4aa03c" strokeWidth="3" /><path d="M24 50l17 4-8 11z" fill="#4aa03c" />
          <path d="M58 74l30-14" stroke="#cc1c5c" strokeWidth="3" /><path d="M103 55L86 53l6 14z" fill="#cc1c5c" />
          <text x="53" y="19">z</text><text x="11" y="46">y</text><text x="110" y="57">x</text>
        </svg>
      </Axes>
    </Canvas>
  </Panel>
);

const Messages = () => (
  <Panel>
    <LogTabs>
      <LogTab $active>消息<Cross s={18} c="#cfd2da" /></LogTab>
      <LogTab>进度</LogTab>
      <LogTab>日志</LogTab>
      <PanelMenu />
    </LogTabs>
    <LogTools><ToolButton aria-label="清除"><Broom /></ToolButton></LogTools>
    <LogBox>COMSOL Multiphysics 5.5.0.359</LogBox>
  </Panel>
);

export default function App() {
  const [tab, setTab] = useState('主屏幕');
  return (
    <Window>
      <GlobalStyle />
      <TitleBar>
        <QuickBar>
          <AppMark><Logo /></AppMark>
          <Rule $gap={10} />
          {quick.map(([name, icon, off]) => <QuickButton key={name} aria-label={name} disabled={off}>{icon}</QuickButton>)}
          <QuickButton $w={27} aria-label="自定义"><Caret /></QuickButton>
          <Rule $gap={4} />
        </QuickBar>
        <WindowTitle>Untitled.mph - COMSOL Multiphysics</WindowTitle>
        <WindowButtons>
          <WindowButton aria-label="最小化"><Svg w={20} h={2}><path d="M0 1h20" stroke="#888" strokeWidth="2" /></Svg></WindowButton>
          <WindowButton aria-label="还原"><Svg w={22} h={20}><path d="M1 5h15v14H1zM5 5V1h15v14h-4" stroke="#222" strokeWidth="1.8" /></Svg></WindowButton>
          <WindowButton aria-label="关闭"><Cross s={20} c="#333" sw={1.6} /></WindowButton>
        </WindowButtons>
      </TitleBar>

      <TabRow>
        <FileButton>文件<Caret w={14} color="#fff" /></FileButton>
        {ribbonTabs.map(([name, blue]) => (
          <RibbonTab key={name} $active={name === tab} $blue={blue} onClick={() => setTab(name)}>{name}</RibbonTab>
        ))}
        <HelpButton aria-label="帮助">?</HelpButton>
      </TabRow>

      <Ribbon>
        <Group $left={13} $right={10}>
          <GroupBody><Big icon={<LetterA />} label={<>App<br />开发器</>} /></GroupBody>
          <GroupName>App</GroupName>
        </Group>
        <Group $left={16}>
          <GroupBody>
            <Big icon={<CubeFaded />} label="选择组件" caret off />
            <Big icon={<CubeWire />} label="添加组件" caret />
          </GroupBody>
          <GroupName>模型</GroupName>
        </Group>
        <Group $left={18} $right={19}>
          <GroupBody>
            <Big icon={<PiBig />} label="参数" caret />
            <Stack>
              <StackRow><Small icon="a=" label="变量" caret /><Small icon={<PiSmall c="#cfd3da" />} label="参数实例" off /></StackRow>
              <Small icon="f(x)" label="函数" caret />
            </Stack>
          </GroupBody>
          <GroupName>定义</GroupName>
        </Group>
        <Group $right={10}>
          <GroupBody>
            <Big icon={<Brick c="#f3bdb5" d="#efaea5" />} label="全部构建" off />
            <Stack>
              <Small icon={<ImportIcon />} label="导入" off />
              <Small icon={<LinkIcon />} label="LiveLink" caret off />
            </Stack>
          </GroupBody>
          <GroupName>几何</GroupName>
        </Group>
        <Group $left={18}>
          <GroupBody><Big icon={<MaterialBig />} label="添加材料" /></GroupBody>
          <GroupName>材料</GroupName>
        </Group>
        <Group>
          <GroupBody>
            <Big icon={<Atom dim />} label="选择物理场接口" caret off />
            <Big icon={<Atom />} label="添加物理场" />
          </GroupBody>
          <GroupName>物理场</GroupName>
        </Group>
        <Group $left={18}>
          <GroupBody>
            <Big icon={<Brick c="#a9b4c1" d="#98a4b3" />} label="构建网格" off />
            <Big icon={<MeshTri />} label="选择网格" caret off />
          </GroupBody>
          <GroupName>网格</GroupName>
        </Group>
        <Group>
          <GroupBody>
            <Big icon={<Equals />} label="计算" off />
            <Big icon={<Glasses dim />} label="选择研究" caret off />
            <Big icon={<Glasses />} label="添加研究" />
          </GroupBody>
          <GroupName>研究</GroupName>
        </Group>
        <Group $left={18} $right={10}>
          <GroupBody>
            <Stack>
              <Small icon={<PinkCube />} label="选择绘图组" caret off />
              <Small icon={<PlotStack />} label="添加绘图组" caret />
            </Stack>
          </GroupBody>
          <GroupName>结果</GroupName>
        </Group>
        <Group $right={16}>
          <GroupBody>
            <Stack>
              <Small icon={<WindowsIcon />} label="窗口" caret />
              <Small icon={<ResetIcon />} label="重置桌面" caret />
            </Stack>
          </GroupBody>
          <GroupName>布局</GroupName>
        </Group>
      </Ribbon>

      <Desk>
        <ModelBuilder />
        <Settings />
        <RightColumn>
          <Graphics />
          <Messages />
        </RightColumn>
      </Desk>

      <StatusBar>748 MB | 915 MB</StatusBar>
    </Window>
  );
}
